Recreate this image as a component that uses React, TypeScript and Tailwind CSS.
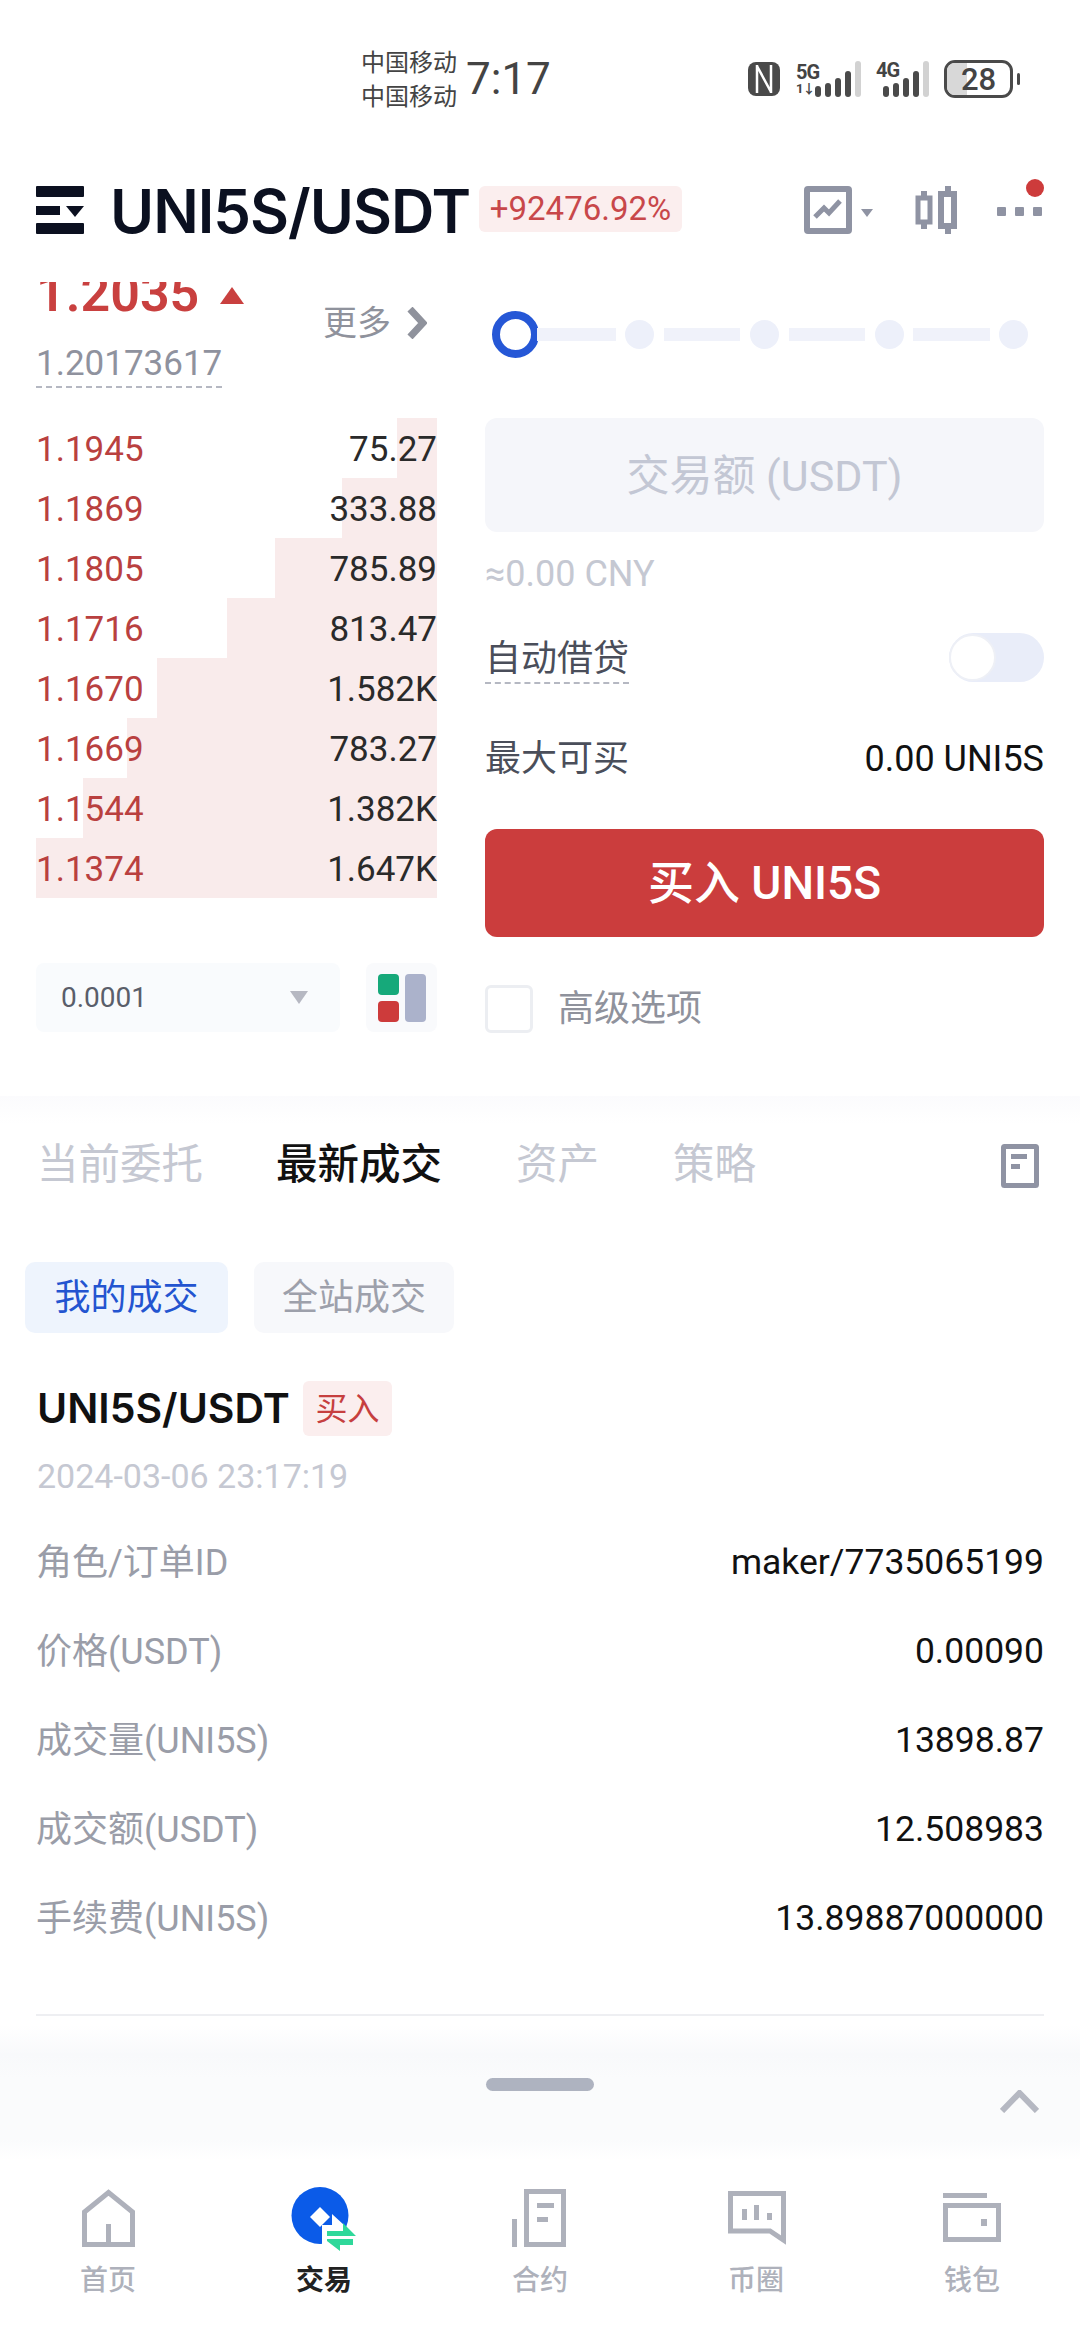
import React from "react";

const FONT = "font-['Roboto','Noto_Sans_CJK_SC',sans-serif]";

const asks = [
  { price: "1.1945", amount: "75.27", width: "w-[40px]" },
  { price: "1.1869", amount: "333.88", width: "w-[95px]" },
  { price: "1.1805", amount: "785.89", width: "w-[162px]" },
  { price: "1.1716", amount: "813.47", width: "w-[210px]" },
  { price: "1.1670", amount: "1.582K", width: "w-[280px]" },
  { price: "1.1669", amount: "783.27", width: "w-[310px]" },
  { price: "1.1544", amount: "1.382K", width: "w-[354px]" },
  { price: "1.1374", amount: "1.647K", width: "w-[401px]" },
];

const details = [
  { label: "角色/订单ID", value: "maker/7735065199" },
  { label: "价格(USDT)", value: "0.00090" },
  { label: "成交量(UNI5S)", value: "13898.87" },
  { label: "成交额(USDT)", value: "12.508983" },
  { label: "手续费(UNI5S)", value: "13.89887000000" },
];

function SignalBars() {
  const heights = [11, 14, 19, 26];
  return (
    <svg width="46" height="36" viewBox="0 0 46 36" fill="#4a4a4a">
      {heights.map((h, i) => (
        <rect key={i} x={i * 10} y={36 - h} width="6" height={h} rx="3" />
      ))}
      <rect x="40" y="0" width="6" height="36" rx="3" fill="#d2d2d2" />
    </svg>
  );
}

function StatusBar() {
  return (
    <div className="flex h-[150px] items-start pl-[361px] pt-[46px] text-[#444]">
      <div className="flex w-[105px] flex-col text-[24px] leading-[34px]">
        <span>中国移动</span>
        <span>中国移动</span>
      </div>
      <span className="mt-[1px] text-[44px] leading-[64px]">7:17</span>
      <div className="ml-auto mr-[60px] mt-[14px] flex items-center">
        <svg width="32" height="34" viewBox="0 0 32 34" className="mr-[16px]">
          <rect width="32" height="34" rx="8" fill="#4a4a4a" />
          <path d="M9 3v28M23 3v28M9 4l14 26" stroke="#fff" strokeWidth="2.5" fill="none" />
        </svg>
        <div className="mr-[15px] flex h-[36px] w-[65px] items-end justify-between">
          <div className="flex w-[24px] flex-col text-[20px] font-bold leading-[18px] tracking-[-1px]">
            <span>5G</span>
            <span className="text-[13px] leading-[16px]">1↓</span>
          </div>
          <div className="ml-[-5px]">
            <SignalBars />
          </div>
        </div>
        <div className="relative mr-[15px] flex h-[36px] w-[53px] items-end justify-end">
          <span className="absolute left-0 top-[0px] text-[20px] font-bold leading-[18px] tracking-[-1px]">4G</span>
          <SignalBars />
        </div>
        <div className="relative flex h-[38px] w-[69px] items-center justify-center overflow-hidden rounded-[11px] border-[3px] border-[#4a4a4a]">
          <div className="absolute inset-y-0 left-0 w-[20px] bg-[#d8d8d8]" />
          <span className="relative text-[31px] font-medium leading-none">28</span>
        </div>
        <div className="ml-[4px] h-[12px] w-[3px] rounded-full bg-[#4a4a4a]" />
      </div>
    </div>
  );
}

function TopBar() {
  return (
    <div className="relative flex h-[132px] items-start pl-[36px] pt-[36px]">
      <svg width="48" height="48" viewBox="0 0 48 48" fill="#0b1020" className="mr-[26px]">
        <rect width="48" height="11" rx="1" />
        <rect y="20" width="24" height="9" />
        <path d="M30 20h18l-9 11z" />
        <rect y="37" width="48" height="11" rx="1" />
      </svg>
      <span className="mt-[-6px] w-[356px] whitespace-nowrap font-['Inter'] text-[60px] font-semibold leading-[62px] tracking-[-1px] text-[#0b1020]">
        UNI5S/USDT
      </span>
      <span className="ml-[13px] flex h-[46px] w-[203px] items-center justify-center rounded-[6px] bg-[#fbeeee] text-[33px] text-[#c8474a]">
        +92476.92%
      </span>
      <svg width="48" height="48" viewBox="0 0 48 48" className="ml-[122px]" fill="none" stroke="#8f93a3">
        <rect x="3" y="3" width="42" height="42" rx="1" strokeWidth="6" />
        <path d="M11 31l9-9 5 5 11-12" strokeWidth="5" />
      </svg>
      <div className="ml-[9px] mt-[23px] h-0 w-0 border-x-[6px] border-t-[8px] border-x-transparent border-t-[#8f93a3]" />
      <svg width="42" height="48" viewBox="0 0 42 48" className="ml-[42px]" fill="none" stroke="#8f93a3">
        <rect x="3" y="12" width="12" height="24" strokeWidth="5" />
        <path d="M9 5v7M9 36v7M33 0v8M33 40v8" strokeWidth="6" />
        <rect x="26" y="8" width="13" height="32" strokeWidth="6" />
      </svg>
      <div className="ml-[40px] mt-[21px] flex gap-[9px]">
        <div className="size-[9px] rounded-[1px] bg-[#8f93a3]" />
        <div className="size-[9px] rounded-[1px] bg-[#8f93a3]" />
        <div className="size-[9px] rounded-[1px] bg-[#8f93a3]" />
      </div>
      <div className="absolute right-[36px] top-[29px] size-[18px] rounded-full bg-[#cd3b3b]" />
    </div>
  );
}

function OrderBook() {
  return (
    <div className="w-[401px]">
      <div className="flex h-[136px] justify-between">
        <div className="flex flex-col">
          <div className="flex h-[30px] items-end overflow-hidden">
            <span className="text-[52px] font-semibold leading-[36px] text-[#c9403f]">1.2035</span>
            <div className="mb-[8px] ml-[21px] h-0 w-0 border-x-[12px] border-b-[17px] border-x-transparent border-b-[#c9403f]" />
          </div>
          <span className="mt-[32px] self-start border-b-2 border-dashed border-[#b5b8c2] pb-[2px] text-[35px] leading-[40px] text-[#8f929e]">
            1.20173617
          </span>
        </div>
        <div className="mr-[10px] mt-[19px] flex h-[44px] items-center text-[34px] text-[#8f929c]">
          <span>更多</span>
          <svg width="20" height="32" viewBox="0 0 20 32" className="ml-[16px]" fill="none" stroke="#8f929c" strokeWidth="7">
            <path d="M3 2l13 14L3 30" />
          </svg>
        </div>
      </div>
      {asks.map((row) => (
        <div key={row.price} className="relative flex h-[60px] items-center justify-between pt-[5px] text-[35px]">
          <div className={`absolute inset-y-0 right-0 bg-[#f9ebeb] ${row.width}`} />
          <span className="relative text-[#b9403f]">{row.price}</span>
          <span className="relative text-[#2a2a2a]">{row.amount}</span>
        </div>
      ))}
      <div className="mt-[65px] flex justify-between">
        <div className="flex h-[69px] w-[304px] items-center justify-between rounded-[8px] bg-[#f9fbfd] pl-[25px] pr-[32px]">
          <span className="text-[28px] text-[#5a5e6a]">0.0001</span>
          <div className="h-0 w-0 border-x-[9px] border-t-[13px] border-x-transparent border-t-[#b6b8c2]" />
        </div>
        <div className="flex h-[69px] w-[71px] items-center justify-center gap-[6px] rounded-[8px] bg-[#f9fafc]">
          <div className="flex flex-col gap-[6px]">
            <div className="h-[21px] w-[21px] rounded-[4px] bg-[#16a97a]" />
            <div className="h-[21px] w-[21px] rounded-[4px] bg-[#cd3b3b]" />
          </div>
          <div className="h-[48px] w-[21px] rounded-[4px] bg-[#abb2cb]" />
        </div>
      </div>
    </div>
  );
}

function TradeForm() {
  return (
    <div className="w-[559px]">
      <div className="flex h-[136px] items-start pl-[7px] pt-[29px]">
        <div className="size-[47px] rounded-full border-[8px] border-[#2557d6]" />
        <div className="flex h-[47px] items-center">
          <div className="ml-[-2px] h-[13px] w-[79px] bg-[#f0f2fa]" />
          <div className="ml-[9px] size-[29px] rounded-full bg-[#edf0fa]" />
          <div className="ml-[10px] h-[13px] w-[76px] bg-[#f0f2fa]" />
          <div className="ml-[10px] size-[29px] rounded-full bg-[#edf0fa]" />
          <div className="ml-[10px] h-[13px] w-[76px] bg-[#f0f2fa]" />
          <div className="ml-[10px] size-[29px] rounded-full bg-[#edf0fa]" />
          <div className="ml-[9px] h-[13px] w-[77px] bg-[#f0f2fa]" />
          <div className="ml-[9px] size-[29px] rounded-full bg-[#edf0fa]" />
        </div>
      </div>
      <div className="flex h-[114px] items-center justify-center rounded-[12px] bg-[#f5f6fa] pt-[2px] text-[43px] text-[#c3c7d4]">
        交易额 (USDT)
      </div>
      <div className="mt-[22px] text-[36px] leading-[40px] text-[#c5c8d2]">≈0.00 CNY</div>
      <div className="mt-[38px] flex h-[60px] items-start justify-between">
        <span className="mt-[4px] border-b-2 border-dashed border-[#b5b8c2] text-[36px] leading-[46px] text-[#4a4e5a]">
          自动借贷
        </span>
        <div className="mt-[1px] flex h-[49px] w-[95px] items-center rounded-full bg-[#e9edf9]">
          <div className="size-[47px] rounded-full border-2 border-[#eef0f6] bg-white" />
        </div>
      </div>
      <div className="mt-[44px] flex h-[46px] items-center justify-between">
        <span className="text-[36px] text-[#4a4e5a]">最大可买</span>
        <span className="text-[36px] text-[#111]">0.00 UNI5S</span>
      </div>
      <button className="mt-[47px] flex h-[108px] w-full items-center justify-center rounded-[12px] bg-[#cb3d3d] text-[46px] font-medium text-white">
        买入 UNI5S
      </button>
      <div className="mt-[48px] flex h-[48px] items-center">
        <div className="size-[48px] rounded-[6px] border-[3px] border-[#eceef2]" />
        <span className="ml-[25px] mt-[-1px] text-[36px] text-[#8f929c]">高级选项</span>
      </div>
    </div>
  );
}

function TradeDetails() {
  return (
    <>
      <div className="flex h-[80px] items-center pl-[37px] pt-[3px] text-[41.5px]">
        <span className="text-[#c5c8d2]">当前委托</span>
        <span className="ml-[73px] font-medium text-[#111]">最新成交</span>
        <span className="ml-[74px] text-[#c5c8d2]">资产</span>
        <span className="ml-[74px] text-[#c5c8d2]">策略</span>
        <svg width="38" height="44" viewBox="0 0 38 44" className="ml-[245px]" fill="none" stroke="#8f93a3" strokeWidth="5">
          <rect x="2.5" y="2.5" width="33" height="39" rx="1" />
          <path d="M10 12.5h16M10 22.5h9" />
        </svg>
      </div>
      <div className="mt-[58px] flex gap-[26px] pl-[25px]">
        <div className="flex h-[71px] w-[203px] items-center justify-center rounded-[10px] bg-[#eef4fd] text-[36px] text-[#2354d0]">
          我的成交
        </div>
        <div className="flex h-[71px] w-[200px] items-center justify-center rounded-[10px] bg-[#f7f8fb] text-[36px] text-[#9da0ab]">
          全站成交
        </div>
      </div>
      <div className="mt-[48px] flex h-[55px] items-center pl-[37px]">
        <span className="w-[251px] whitespace-nowrap font-['Inter'] text-[41px] font-semibold text-[#111]">UNI5S/USDT</span>
        <span className="ml-[15px] flex h-[55px] w-[89px] items-center justify-center rounded-[6px] bg-[#fbeeee] text-[32px] text-[#c63f3f]">
          买入
        </span>
      </div>
      <div className="mt-[20px] pl-[37px] text-[34px] leading-[40px] text-[#c5c8d2]">2024-03-06 23:17:19</div>
      <div className="mt-[22px] px-[36px]">
        {details.map((row) => (
          <div key={row.label} className="flex h-[89px] items-center justify-between">
            <span className="text-[36px] text-[#9a9da8]">{row.label}</span>
            <span className="text-[35.5px] text-[#111]">{row.value}</span>
          </div>
        ))}
      </div>
      <div className="mx-[36px] mt-[51px] h-[2px] bg-[#eeeff2]" />
    </>
  );
}

function NavHome() {
  return (
    <svg width="60" height="64" viewBox="0 0 60 64" fill="none" stroke="#aeb1bb" strokeWidth="5">
      <path d="M6.5 58.5V26L30.5 6.5 54.5 26v32.5z" />
      <path d="M30.5 38v20" />
    </svg>
  );
}

function NavTrade() {
  return (
    <svg width="80" height="64" viewBox="0 0 80 64" className="overflow-visible">
      <circle cx="36" cy="29.5" r="28.5" fill="#0b5be8" />
      <path d="M36 21l10 10-10 10-10-10z" fill="#fff" />
      <path d="M38 39h10V28l24 22v16H38z" fill="#fff" />
      <path d="M59 37l13 13H43v-5h16z" fill="#2fd89a" />
      <path d="M69 53v6H56v6L43 55v-2z" fill="#2fd89a" />
    </svg>
  );
}

function NavContract() {
  return (
    <svg width="60" height="64" viewBox="0 0 60 64" fill="#aeb1bb">
      <rect x="2" y="33" width="5" height="28" />
      <rect x="16.5" y="5.5" width="37" height="53" fill="none" stroke="#aeb1bb" strokeWidth="5" />
      <rect x="27" y="17" width="17" height="5" />
      <rect x="27" y="31" width="11" height="5" />
    </svg>
  );
}

function NavFeed() {
  return (
    <svg width="60" height="64" viewBox="0 0 60 64" fill="#aeb1bb">
      <path d="M4.5 7.5h53V54L44 45H4.5z" fill="none" stroke="#aeb1bb" strokeWidth="5" />
      <rect x="16" y="23" width="5" height="11" />
      <rect x="28" y="19" width="5" height="15" />
      <rect x="41" y="27" width="5" height="7" />
    </svg>
  );
}

function NavWallet() {
  return (
    <svg width="60" height="64" viewBox="0 0 60 64" fill="#aeb1bb">
      <rect x="1" y="7" width="44" height="5" />
      <rect x="3.5" y="19.5" width="53" height="34" fill="none" stroke="#aeb1bb" strokeWidth="5" />
      <rect x="39" y="33" width="6" height="7" />
    </svg>
  );
}

const navItems = [
  { label: "首页", icon: <NavHome />, active: false },
  { label: "交易", icon: <NavTrade />, active: true },
  { label: "合约", icon: <NavContract />, active: false },
  { label: "币圈", icon: <NavFeed />, active: false },
  { label: "钱包", icon: <NavWallet />, active: false },
];

function BottomNav() {
  return (
    <div className="grid grid-cols-5 pt-[26px]">
      {navItems.map((item) => (
        <div key={item.label} className="flex flex-col items-center">
          {item.icon}
          <span
            className={
              item.active
                ? "mt-[11px] text-[28px] font-bold leading-[40px] text-[#222]"
                : "mt-[11px] text-[28px] font-medium leading-[40px] text-[#aeb1bb]"
            }
          >
            {item.label}
          </span>
        </div>
      ))}
    </div>
  );
}

export default function App() {
  return (
    <div className={`h-[2340px] w-[1080px] overflow-hidden bg-white ${FONT}`}>
      <StatusBar />
      <TopBar />
      <div className="flex h-[814px] justify-between px-[36px]">
        <OrderBook />
        <TradeForm />
      </div>
      <div className="h-[28px] bg-gradient-to-b from-[#fbfbfd] to-white" />
      <TradeDetails />
      <div className="mt-[9px] grid h-[135px] grid-cols-[1fr_108px_1fr] bg-[linear-gradient(to_bottom,#ffffff_0%,#f8f9fb_22%,#fafbfc_40%,#fafbfc_85%,#ffffff_100%)] pt-[53px]">
        <div />
        <div className="h-[13px] rounded-full bg-[#aeb3c0]" />
        <div className="flex justify-end pr-[41px] pt-[12px]">
          <svg width="39" height="23" viewBox="0 0 39 23" fill="none" stroke="#b5b8c2" strokeWidth="6">
            <path d="M2 21L19.5 3 37 21" />
          </svg>
        </div>
      </div>
      <BottomNav />
    </div>
  );
}
